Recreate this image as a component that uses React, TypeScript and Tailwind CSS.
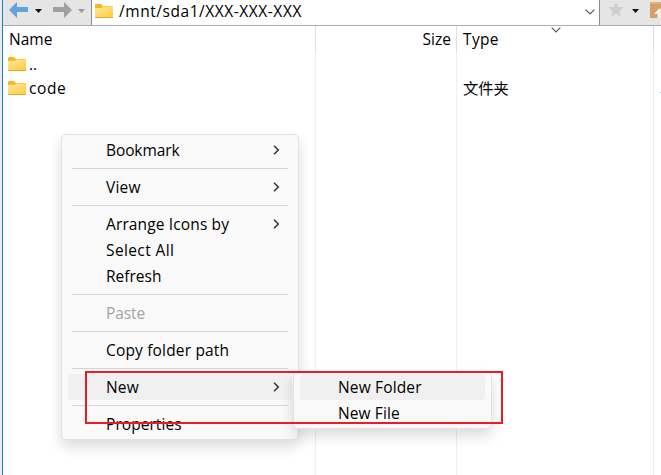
import React from 'react';

type Entry = { label: string; arrow?: boolean; disabled?: boolean; active?: boolean; tracking?: string } | null;

const entries: Entry[] = [
  { label: 'Bookmark', arrow: true, tracking: 'tracking-[-0.1px]' },
  null,
  { label: 'View', arrow: true, tracking: 'tracking-[0.2px]' },
  null,
  { label: 'Arrange Icons by', arrow: true, tracking: 'tracking-[0.13px]' },
  { label: 'Select All', tracking: 'tracking-[0.38px]' },
  { label: 'Refresh' },
  null,
  { label: 'Paste', disabled: true, tracking: 'tracking-[-0.1px]' },
  null,
  { label: 'Copy folder path', tracking: 'tracking-[0.17px]' },
  null,
  { label: 'New', arrow: true, active: true, tracking: 'tracking-[0.2px]' },
  null,
  { label: 'Properties', tracking: 'tracking-[0.06px]' },
];

function Folder() {
  return (
    <svg className="block shrink-0" width="18" height="14" viewBox="0 0 18 14">
      <defs>
        <linearGradient id="folder" x1="0" y1="0" x2="1" y2="1">
          <stop offset="0" stopColor="#ffe9a2" />
          <stop offset="1" stopColor="#ffcb3d" />
        </linearGradient>
      </defs>
      <path d="M0 1Q0 0 1 0H6L8 2H17Q18 2 18 3V8H0Z" fill="#f8b81d" />
      <path d="M0 4H6.5L8 2.6H18V13H0Z" fill="url(#folder)" />
      <path d="M0 13H18V13.4Q18 14 17 14H1Q0 14 0 13.4Z" fill="#eba91f" />
    </svg>
  );
}

function Caret({ color }: { color: string }) {
  return (
    <svg className="block shrink-0" width="7" height="4" viewBox="0 0 7 4">
      <path d="M0 0H7L3.5 4Z" fill={color} />
    </svg>
  );
}

function Arrow({ color, flip }: { color: string; flip?: boolean }) {
  return (
    <svg className={flip ? 'block shrink-0 -scale-x-100' : 'block shrink-0'} width="19" height="16" viewBox="0 0 19 16">
      <path d="M0 8L8 0V5H19V10H8V16Z" fill={color} />
    </svg>
  );
}

function Down() {
  return (
    <svg className="block shrink-0" width="10" height="6" viewBox="0 0 10 6">
      <path d="M.7.7L5 5L9.3.7" fill="none" stroke="#555" strokeWidth="1.1" />
    </svg>
  );
}

function Toolbar() {
  return (
    <div className="flex h-[26px] border-b border-[#ababab] bg-[#e5e5e5]">
      <div className="flex w-[88px] items-start pl-[6px]">
        <div className="mt-[2px]"><Arrow color="#64a2d8" /></div>
        <div className="mt-[9px] ml-[7px]"><Caret color="#111" /></div>
        <div className="mt-[2px] ml-[11px]"><Arrow color="#a0a0a0" flip /></div>
        <div className="mt-[9px] ml-[6px]"><Caret color="#999" /></div>
      </div>
      <div className="flex w-[509px] items-start border-x border-[#8c8c8c] bg-white pl-[3px]">
        <div className="mt-1"><Folder /></div>
        <span className="ml-[6px] h-6 leading-[23px] tracking-[0.55px]">/mnt/sda1/XXX-XXX-XXX</span>
        <div className="mt-[9px] mr-[4.5px] ml-auto"><Down /></div>
      </div>
      <div className="flex min-w-0 flex-1 items-start overflow-hidden pl-[8px]">
        <svg className="mt-[2px] block shrink-0" width="16" height="15" viewBox="0 0 16 15">
          <path d="M8 0L10.2 5H16L11.5 8.9L13 15L8 11.7L3 15L4.5 8.9L0 5H5.8Z" fill="#cfcfcf" />
        </svg>
        <div className="mt-[9px] ml-[8px]"><Caret color="#111" /></div>
        <svg className="mt-[2px] ml-[11px] block shrink-0" width="18" height="16" viewBox="0 0 18 16">
          <path d="M0 0H18V16H0Z" fill="#d4a066" />
          <path d="M0 0H18V2H0Z" fill="#dfb27e" />
          <path d="M4 12L9.5 6L15 12H11.5V16H7.5V12Z" fill="#f3ede5" />
        </svg>
      </div>
    </div>
  );
}

function FileList() {
  return (
    <div className="flex min-h-0 flex-1">
      <div className="flex w-[313px] flex-col border-r border-[#e8f0fa]">
        <div className="-mr-px h-[26px] border-r border-[#dedede] pl-[6px] leading-[27px]">Name</div>
        <div className="flex h-6 items-center pl-[5px]"><Folder /><span className="ml-[3px] h-6 leading-[24px]">..</span></div>
        <div className="flex h-6 items-center pl-[5px]"><Folder /><span className="ml-[3px] h-6 leading-[24px] tracking-[0.6px]">code</span></div>
      </div>
      <div className="w-[141px] border-r border-[#e8f0fa]">
        <div className="-mr-px h-[26px] border-r border-[#dedede] pr-[5px] text-right leading-[27px]">Size</div>
      </div>
      <div className="w-[197px] border-r border-[#e8f0fa]">
        <div className="-mr-px flex h-[26px] items-start border-r border-[#dedede] pl-[6px] leading-[27px]">
          <span className="w-[87.5px] tracking-[0.35px]">Type</span>
          <span className="mt-px"><Down /></span>
        </div>
        <div className="mt-6 h-6 pl-[6px] font-['Noto_Sans_CJK_SC',sans-serif] text-[15.3px] leading-[22px]">文件夹</div>
      </div>
      <div className="flex flex-1 justify-end pt-[66px]"><div className="h-px w-px bg-[#75bdd8]" /></div>
    </div>
  );
}

function Menu() {
  return (
    <div className="absolute top-[134px] left-[61px] w-[238px] rounded-[5px] border border-[#e2e2e2] bg-[#f9f9f9] py-[2px] shadow-[0_7px_14px_rgba(0,0,0,0.14)]">
      {entries.map((e, i) =>
        e === null ? (
          <div key={i} className="mx-[10px] flex h-[11px] items-center"><div className="h-px w-full bg-[#d5d5d5]" /></div>
        ) : (
          <div key={i} className={`mx-[6px] flex h-[26px] items-center justify-between rounded-[4px] pr-[12px] pl-[38px] leading-[26px] ${e.active ? 'bg-[#f0f0f0]' : ''} ${e.disabled ? 'text-[#a3a3a3]' : ''}`}>
            <span className={e.tracking}>{e.label}</span>
            {e.arrow && (
              <svg width="7" height="10" viewBox="0 0 7 10"><path d="M1 .7L5.3 5L1 9.3" fill="none" stroke="#333" strokeWidth="1.5" /></svg>
            )}
          </div>
        ),
      )}
    </div>
  );
}

export default function App() {
  return (
    <div className="relative h-[475px] w-[661px] overflow-hidden bg-white font-['Open_Sans','Noto_Sans_CJK_SC',sans-serif] text-[15.5px] whitespace-nowrap text-black">
      <div className="flex h-full">
        <div className="w-[3px] shrink-0 border-r border-[#1683c6] bg-[#eaeaea]" />
        <div className="flex min-w-0 flex-1 flex-col"><Toolbar /><FileList /></div>
      </div>
      <Menu />
      <div className="absolute top-[371px] left-[293px] w-[199px] rounded-[5px] border border-[#e2e2e2] bg-[#f9f9f9] px-[6px] py-[2px] shadow-[0_7px_14px_rgba(0,0,0,0.14)]">
        <div className="h-[26px] rounded-[4px] bg-[#f0f0f0] pl-[38px] leading-[26px] tracking-[0.15px]">New Folder</div>
        <div className="h-[26px] pl-[38px] leading-[26px] tracking-[0.1px]">New File</div>
      </div>
      <div className="absolute top-[371px] left-[85px] h-[53px] w-[418px] border-2 border-[#ed1c24]" />
    </div>
  );
}
